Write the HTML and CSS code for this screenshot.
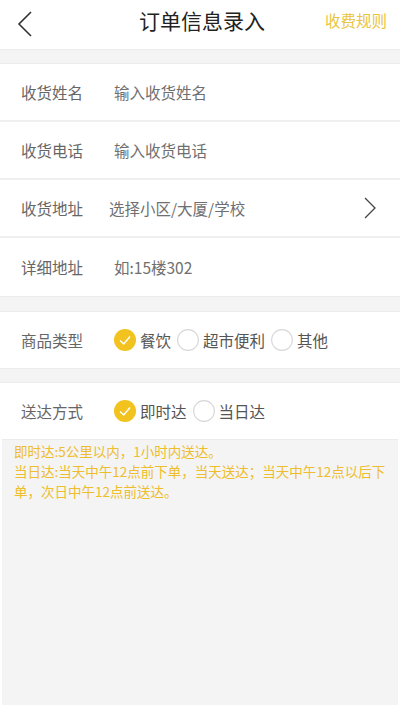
FILE: index.html
```html
<!DOCTYPE html>
<html lang="zh-CN">
<head>
    <meta charset="UTF-8">
    <meta name="viewport" content="width=device-width, initial-scale=1.0">
    <title>订单信息录入</title>
    <link rel="stylesheet" href="styles.css">
</head>
<body>
    <div class="header">
        <svg class="back" width="16" height="26" viewBox="0 0 16 26">
            <polyline points="14,1 2,13 14,25" fill="none" stroke="#333" stroke-width="1.6"/>
        </svg>
        <div class="title">订单信息录入</div>
        <div class="rule">收费规则</div>
    </div>

    <div class="band"></div>

    <div class="group">
        <div class="row">
            <label class="label">收货姓名</label>
            <input class="value" type="text" placeholder="输入收货姓名">
        </div>
        <div class="row">
            <label class="label">收货电话</label>
            <input class="value" type="tel" placeholder="输入收货电话">
        </div>
        <div class="row">
            <label class="label">收货地址</label>
            <div class="value pick">选择小区/大厦/学校</div>
            <svg class="arrow" width="12" height="22" viewBox="0 0 12 22">
                <polyline points="1,1 11,11 1,21" fill="none" stroke="#444" stroke-width="1.3"/>
            </svg>
        </div>
        <div class="row last">
            <label class="label">详细地址</label>
            <input class="value" type="text" placeholder="如:15楼302">
        </div>
    </div>

    <div class="band tall"></div>

    <div class="group">
        <div class="row short last">
            <label class="label">商品类型</label>
            <div class="options">
                <div class="opt on">
                    <svg width="22" height="22" viewBox="0 0 22 22"><circle cx="11" cy="11" r="11" fill="#f2c21f"/><polyline points="6,11.5 9.7,15 16,7.5" fill="none" stroke="#fff" stroke-width="1.5"/></svg>
                    <span>餐饮</span>
                </div>
                <div class="opt">
                    <svg width="22" height="22" viewBox="0 0 22 22"><circle cx="11" cy="11" r="10.4" fill="#fff" stroke="#d8d8d8" stroke-width="1.1"/></svg>
                    <span>超市便利</span>
                </div>
                <div class="opt">
                    <svg width="22" height="22" viewBox="0 0 22 22"><circle cx="11" cy="11" r="10.4" fill="#fff" stroke="#d8d8d8" stroke-width="1.1"/></svg>
                    <span>其他</span>
                </div>
            </div>
        </div>
    </div>

    <div class="band"></div>

    <div class="group">
        <div class="row short last">
            <label class="label">送达方式</label>
            <div class="options">
                <div class="opt on">
                    <svg width="22" height="22" viewBox="0 0 22 22"><circle cx="11" cy="11" r="11" fill="#f2c21f"/><polyline points="6,11.5 9.7,15 16,7.5" fill="none" stroke="#fff" stroke-width="1.5"/></svg>
                    <span>即时达</span>
                </div>
                <div class="opt">
                    <svg width="22" height="22" viewBox="0 0 22 22"><circle cx="11" cy="11" r="10.4" fill="#fff" stroke="#d8d8d8" stroke-width="1.1"/></svg>
                    <span>当日达</span>
                </div>
            </div>
        </div>
    </div>

    <div class="notes">
        <p>即时达:5公里以内，1小时内送达。</p>
        <p>当日达:当天中午12点前下单，当天送达；当天中午12点以后下单，次日中午12点前送达。</p>
    </div>
</body>
</html>
```

FILE: styles.css
```css
* {
    box-sizing: border-box;
}

body {
    margin: 0;
    width: 400px;
    height: 710px;
    display: flex;
    flex-direction: column;
    background-color: white;
    font-family: "Noto Sans CJK SC", "Noto Sans", sans-serif;
}

.header {
    height: 49px;
    display: grid;
    grid-template-columns: 1fr auto 1fr;
    align-items: center;
    padding: 0 13px 10px 17px;
}

.back {
    display: block;
    margin-top: 8px;
}

.title {
    font-size: 21px;
    color: #222;
}

.rule {
    justify-self: end;
    font-size: 15.5px;
    color: #e9c43c;
}

.band {
    height: 15px;
    background-color: #f4f4f4;
    border-top: 1px solid #ececec;
    border-bottom: 1px solid #ececec;
}

.band.tall {
    height: 16px;
}

.row {
    height: 58px;
    display: flex;
    align-items: center;
    padding-left: 21px;
    padding-right: 24px;
    border-bottom: 2px solid #efefef;
}

.row.last {
    border-bottom: none;
}

.row.short {
    height: 56px;
}

.row.short + .row {
    height: 57px;
}

.label {
    width: 93px;
    flex-shrink: 0;
    font-size: 15.5px;
    color: #666;
}

.value {
    flex: 1;
    border: none;
    outline: none;
    padding: 0;
    font-family: inherit;
    font-size: 15.5px;
    color: #555;
    background: none;
}

.value::placeholder {
    color: #6f6f6f;
}

.pick {
    margin-left: -5px;
    color: #6f6f6f;
}

.options {
    display: flex;
    align-items: center;
}

.opt {
    display: flex;
    align-items: center;
    gap: 4px;
    margin-right: 6px;
    font-size: 15.5px;
    color: #555;
}

.opt svg {
    display: block;
}

.notes {
    flex: 1;
    margin: 0 2px 5px;
    padding: 1px 8px 0 12px;
    background-color: #f4f4f4;
    border-top: 1px solid #ececec;
}

.notes p {
    margin: 0;
    font-size: 13.5px;
    line-height: 20px;
    color: #eebd2c;
}
```
